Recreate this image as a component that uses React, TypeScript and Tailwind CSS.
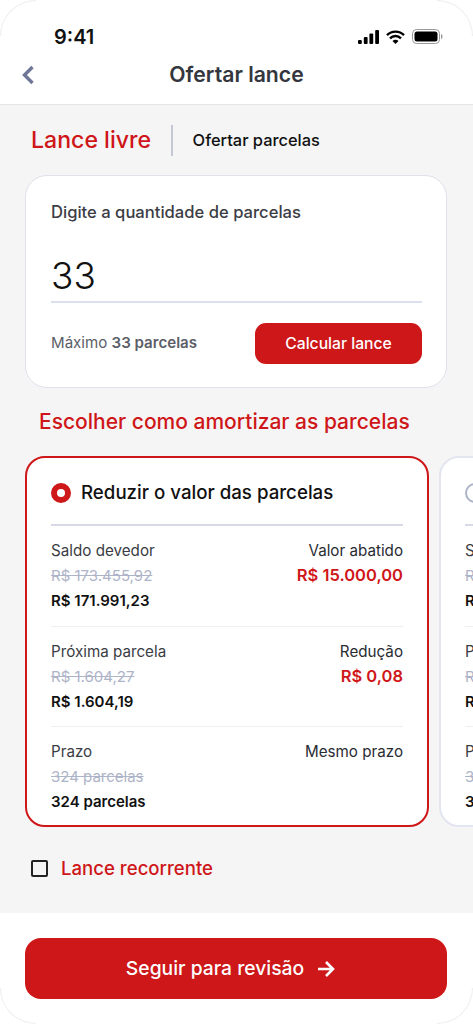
import React from "react";

function Row({ label, old, now, rl, rv }: { label: string; old: string; now: string; rl: string; rv?: string }) {
  return (
    <div className="flex justify-between">
      <div className="flex flex-col">
        <span className="text-[15.2px] leading-[25px] text-[#3b3d45] whitespace-nowrap">{label}</span>
        <span className="text-[15px] leading-[25px] text-[#aeb4c8] line-through whitespace-nowrap">{old}</span>
        <span className="text-[15px] leading-[25px] font-semibold text-[#111] whitespace-nowrap">{now}</span>
      </div>
      <div className="flex flex-col items-end">
        <span className="text-[15.2px] leading-[25px] text-[#2a2c33] whitespace-nowrap">{rl}</span>
        {rv && <span className="text-[16.5px] leading-[25px] font-semibold text-[#cf1619] whitespace-nowrap">{rv}</span>}
      </div>
    </div>
  );
}

function Card({ active }: { active?: boolean }) {
  return (
    <div className={active ? "w-[404px] h-[371px] shrink-0 bg-white rounded-[20px] border-2 border-[#cd1719] px-[24px]" : "w-[404px] h-[371px] shrink-0 bg-white rounded-[20px] border-2 border-[#e3e5f0] px-[24px]"}>
      <div className="flex items-center h-[66px] pt-[4px]">
        {active ? (
          <div className="w-[20px] h-[20px] rounded-full border-[6px] border-[#cd1719] bg-white" />
        ) : (
          <div className="w-[20px] h-[20px] rounded-full border-2 border-[#aeb4c8] bg-white" />
        )}
        {active && <span className="ml-[10px] text-[18.7px] font-medium text-[#111] whitespace-nowrap">Reduzir o valor das parcelas</span>}
      </div>
      <div className="h-[2px] bg-[#d8d9e6]" />
      <div className="pt-[12px] pb-[13px] border-b border-[#eeeff2]">
        <Row label="Saldo devedor" old="R$ 173.455,92" now="R$ 171.991,23" rl={active ? "Valor abatido" : ""} rv={active ? "R$ 15.000,00" : undefined} />
      </div>
      <div className="pt-[12px] pb-[12px] border-b border-[#eeeff2]">
        <Row label="Próxima parcela" old="R$ 1.604,27" now="R$ 1.604,19" rl={active ? "Redução" : ""} rv={active ? "R$ 0,08" : undefined} />
      </div>
      <div className="pt-[12px]">
        <Row label="Prazo" old="324 parcelas" now="324 parcelas" rl={active ? "Mesmo prazo" : ""} />
      </div>
    </div>
  );
}

export default function App() {
  return (
    <div className="relative w-[473px] h-[1024px] overflow-hidden bg-white flex flex-col font-['Inter',sans-serif]">
      <div className="absolute left-0 top-0 w-[36px] h-[36px] rounded-tl-[36px] border-t border-l border-[#eeeeee]" />
      <div className="absolute right-0 top-0 w-[36px] h-[36px] rounded-tr-[36px] border-t border-r border-[#eeeeee]" />
      <div className="absolute left-0 bottom-0 w-[36px] h-[36px] rounded-bl-[36px] border-b border-l border-[#eeeeee]" />
      <div className="absolute right-0 bottom-0 w-[36px] h-[36px] rounded-br-[36px] border-b border-r border-[#eeeeee]" />

      <div className="h-[105px] bg-white border-b border-[#e3e4e8] flex flex-col shrink-0">
        <div className="h-[58px] pl-[54px] pr-[30px] pt-[25px] flex justify-between items-start">
          <span className="text-[20px] leading-[25px] font-semibold text-[#111]">9:41</span>
          <div className="flex items-center gap-[7px] pt-[4px]">
            <svg width="21" height="14" viewBox="0 0 21 14"><rect x="0" y="10" width="3.800" height="4" rx="1" /><rect x="5.800" y="7" width="3.800" height="7" rx="1" /><rect x="11.400" y="3.500" width="3.800" height="10.500" rx="1" /><rect x="17.200" y="0" width="3.800" height="14" rx="1" /></svg>
            <svg width="19" height="14" viewBox="0 0 19 14" fill="none" stroke="#000" strokeWidth="2.400"><path d="M1 5.200a12 12 0 0 1 17 0" /><path d="M4 8.300a7.800 7.800 0 0 1 11 0" /><path d="M9.500 14 L6.500 11a4.200 4.200 0 0 1 6 0Z" fill="#000" stroke="none" /></svg>
            <svg width="31" height="15" viewBox="0 0 31 15"><rect x="0.500" y="0.500" width="27" height="14" rx="4" fill="none" stroke="#999" /><rect x="2.500" y="2.500" width="23" height="10" rx="2.500" fill="#000" /><path d="M29 5v5c1-.3 1.500-1.400 1.500-2.500S30 5.300 29 5z" fill="#999" /></svg>
          </div>
        </div>
        <div className="relative h-[34px] flex items-center justify-center">
          <svg className="absolute left-[21px] top-[7px]" width="14" height="20" viewBox="0 0 14 20" fill="none" stroke="#6f7798" strokeWidth="3.400"><path d="M11.500 2 L3.500 10 L11.500 18" /></svg>
          <span className="text-[21.2px] font-semibold text-[#34363e]">Ofertar lance</span>
        </div>
      </div>

      <div className="flex-1 bg-[#f5f5f5] flex flex-col overflow-hidden">
        <div className="flex items-center h-[70px] pl-[31px] shrink-0">
          <span className="text-[23.1px] text-[#cf1619] font-medium whitespace-nowrap">Lance livre</span>
          <div className="w-[1.500px] h-[31px] bg-[#c4c8d4] mx-[20px]" />
          <span className="text-[16.4px] font-medium text-[#111] whitespace-nowrap">Ofertar parcelas</span>
        </div>

        <div className="ml-[25px] mr-[26px] h-[213px] shrink-0 bg-white rounded-[22px] border border-[#dfe1ec] pl-[25px] pr-[24px] pt-[25px] flex flex-col">
          <span className="text-[16.6px] leading-[22px] font-medium text-[#3b3d45] whitespace-nowrap">Digite a quantidade de parcelas</span>
          <div className="mt-[27px] h-[53px] border-b-2 border-[#dcdfee] text-[37px] font-light leading-[52px] text-[#111]">33</div>
          <div className="mt-[20px] flex items-center justify-between">
            <span className="text-[15.1px] text-[#5b5e68] whitespace-nowrap">Máximo <b className="font-semibold">33 parcelas</b></span>
            <div className="w-[167px] h-[41px] rounded-[11px] bg-[#cd1719] text-white text-[15.7px] font-medium flex items-center justify-center whitespace-nowrap">Calcular lance</div>
          </div>
        </div>

        <div className="pl-[39px] mt-[20px] text-[21px] leading-[28px] font-medium text-[#cf1619] shrink-0 whitespace-nowrap">Escolher como amortizar as parcelas</div>

        <div className="flex gap-[10px] ml-[25px] mt-[20px] shrink-0">
          <Card active />
          <Card />
        </div>

        <div className="flex items-center pl-[31px] mt-[28px] shrink-0">
          <div className="w-[17px] h-[17px] border-2 border-[#222] rounded-[2px]" />
          <span className="ml-[13px] text-[18.6px] font-medium text-[#cf1619] whitespace-nowrap">Lance recorrente</span>
        </div>
      </div>

      <div className="h-[111px] shrink-0 bg-white pl-[25px] pr-[26px] pt-[25px]">
        <div className="h-[61px] rounded-[16px] bg-[#cd1719] text-white text-[19.3px] font-medium flex items-center justify-center gap-[13px] pr-[11px]">
          <span className="whitespace-nowrap">Seguir para revisão</span>
          <svg width="18" height="18" viewBox="0 0 18 18" fill="none" stroke="#fff" strokeWidth="2.600"><path d="M1 9h15M9 2l7 7-7 7" /></svg>
        </div>
      </div>
    </div>
  );
}
